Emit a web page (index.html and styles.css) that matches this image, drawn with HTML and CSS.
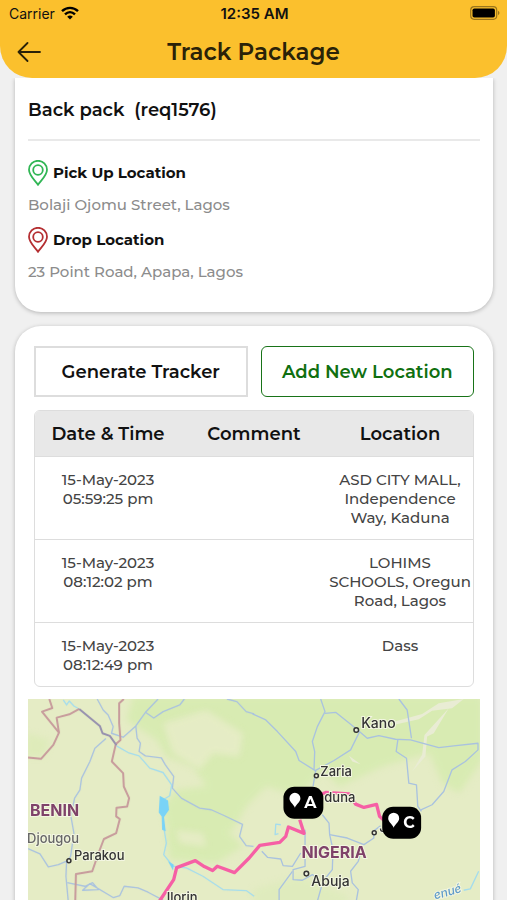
FILE: index.html
```
<!DOCTYPE html>
<html lang="en">
<head>
  <meta charset="UTF-8" />
  <meta name="viewport" content="width=device-width, initial-scale=1" />
  <title>Track Package</title>
  <link rel="stylesheet" href="styles.css">
</head>
<body>

<header>
  <div class="status-bar">
    <div class="carrier">
      <span>Carrier</span>
      <svg width="18" height="14" viewBox="0 0 18 14" fill="none" stroke="#000" stroke-width="2.4">
        <path d="M1 5.2C5.600 0.700 12.400 0.700 17 5.200"/>
        <path d="M4 8.400C7 5.500 11 5.500 14 8.400"/>
        <path d="M9 13.500L6.200 10.700Q9 8.500 11.800 10.700Z" fill="#000" stroke="none"/>
      </svg>
    </div>
    <div class="time">12:35 AM</div>
    <div class="battery">
      <svg width="30" height="14" viewBox="0 0 30 14">
        <rect x="0.700" y="0.700" width="26" height="12.600" rx="3.500" fill="none" stroke="#9a761c" stroke-width="1.200"/>
        <rect x="2.500" y="2.500" width="22.400" height="9" rx="1.800"/>
        <path d="M28 4.800Q31 7 28 9.200Z" fill="#9a761c"/>
      </svg>
    </div>
  </div>
  <div class="title-bar">
    <button class="back" aria-label="Back">
      <svg width="24" height="20" viewBox="0 0 24 20" fill="none" stroke="#2a2208" stroke-width="1.800" stroke-linecap="round" stroke-linejoin="round">
        <path d="M23 10H1.500M10.500 1L1.500 10L10.500 19"/>
      </svg>
    </button>
    <h1>Track Package</h1>
  </div>
</header>

<main>
  <section class="card package">
    <h2>Back pack&nbsp; (req1576)</h2>
    <h3 class="pickup">
      <svg class="pin" viewBox="0 0 20 26"><path d="M10 24.800C7 20.500 1 15.500 1 9.800A9 9 0 0 1 19 9.800C19 15.500 13 20.500 10 24.800Z"/><circle cx="10" cy="10" r="4.800"/></svg>
      Pick Up Location
    </h3>
    <p>Bolaji Ojomu Street, Lagos</p>
    <h3 class="drop">
      <svg class="pin" viewBox="0 0 20 26"><path d="M10 24.800C7 20.500 1 15.500 1 9.800A9 9 0 0 1 19 9.800C19 15.500 13 20.500 10 24.800Z"/><circle cx="10" cy="10" r="4.800"/></svg>
      Drop Location
    </h3>
    <p>23 Point Road, Apapa, Lagos</p>
  </section>

  <section class="card tracking">
    <div class="actions">
      <button class="generate">Generate Tracker</button>
      <button class="add">Add New Location</button>
    </div>

    <table>
      <thead>
        <tr><th>Date &amp; Time</th><th>Comment</th><th>Location</th></tr>
      </thead>
      <tbody>
        <tr><td>15-May-2023<br>05:59:25 pm</td><td></td><td>ASD CITY MALL,<br>Independence<br>Way, Kaduna</td></tr>
        <tr><td>15-May-2023<br>08:12:02 pm</td><td></td><td>LOHIMS<br>SCHOOLS, Oregun<br>Road, Lagos</td></tr>
        <tr><td>15-May-2023<br>08:12:49 pm</td><td></td><td>Dass</td></tr>
      </tbody>
    </table>

    <svg class="map" viewBox="0 0 453 300">
      <defs>
        <filter id="soft" x="-20%" y="-20%" width="140%" height="140%"><feGaussianBlur stdDeviation="9"/></filter>
      </defs>
      <rect width="453" height="300" fill="#e5ecc5"/>

      <!-- vegetation -->
      <g transform="translate(-28 -9) scale(.33333)" fill="#d8ebb2" filter="url(#soft)">
        <path d="M400 20H1450V210L1380 310L1330 280L1290 190L1150 230L1020 290L970 240L900 320L800 290L740 350L700 420L640 440L510 450L490 350L530 300L620 290L580 230L500 200L470 150L380 90Z"/>
        <path d="M500 430L650 390L730 470L650 520L510 510Z"/>
        <path d="M80 130L150 150L130 200L80 200Z" opacity=".6"/>
        <path d="M760 600L900 560L1050 620L1000 720H780Z" opacity=".4"/>
      </g>
      <g transform="translate(-28 -9) scale(.33333)" fill="#e5ecc5" filter="url(#soft)">
        <path d="M490 100L620 60L730 130L720 200L640 190L600 240L520 190Z"/>
        <path d="M530 420L610 430L620 470L540 460Z"/>
      </g>
      <g transform="translate(225 -9) scale(.33333)" fill="#e9ecd4">
        <path d="M420 97L510 72L560 40L635 27L600 55L540 62L500 88L430 104Z"/>
        <path d="M290 198L325 223L300 215Z"/>
        <path d="M590 55L545 130L525 140L520 200L480 245L510 195L517 135Z"/>
      </g>

      <!-- borders, rivers and lakes, west side -->
      <g transform="translate(-28 -9) scale(.33333)" fill="none" stroke-linejoin="round">
        <g stroke="#a9c2df" stroke-width="4">
          <path d="M292 27L310 60L325 75L340 110L335 130L370 142L408 108L437 67L475 27"/>
          <path d="M437 67L462 84L490 65L540 45L554 27"/>
          <path d="M408 108L412 145L422 160L418 185L437 198L485 204L497 225L522 260L518 295L545 325L600 355L635 360L675 378L729 404L720 440L740 468L762 470"/>
          <path d="M682 27L712 35L740 65L764 72"/>
          <path d="M318 146L285 175L270 215L245 265L240 300L224 325L213 380L222 430L212 500L200 515L198 560L205 635"/>
          <path d="M84 477L120 493L145 532L175 525L205 512"/>
          <path d="M202 579L255 590L278 579L296 600L248 602L270 582L340 624L360 618L373 590L415 595L445 608L490 632"/>
        </g>
        <g stroke="#a4dced" stroke-width="4">
          <path d="M190 30L200 45L208 33L222 48L238 57M350 168L385 188L418 198L450 235L490 248L516 285L510 318L490 330"/>
          <path d="M490 400L500 460L492 495L520 530L560 535L610 560L670 600L740 603L764 620"/>
        </g>
        <path d="M480 318L505 332L508 360L493 382L498 425L487 420L486 380L477 368Z" fill="#79d3f7"/>
        <path d="M505 515L522 525L520 543Z" fill="#79d3f7"/>
        <g stroke="#c79b9c" stroke-width="6">
          <path d="M148 27L157 54L126 65L177 128L160 165L123 207L84 203"/>
          <path d="M177 128L170 83L208 73L238 57"/>
          <path d="M372 27L358 40V100L362 150L348 162L336 215L370 250L372 290L388 325L382 350L350 354L349 380L360 388L349 430L312 448L296 490L277 545L228 553L226 635"/>
        </g>
        <path d="M238 57L300 108L308 130L330 138L350 166" stroke="#9690ae" stroke-width="6"/>
      </g>

      <!-- rivers, east side -->
      <g transform="translate(225 -9) scale(.33333)" fill="none" stroke="#a9c2df" stroke-width="4" stroke-linejoin="round">
        <path d="M0 72L40 90L75 125L130 185L140 212L190 243L182 290"/>
        <path d="M205 27L218 65L195 110L180 155L187 185L185 240"/>
        <path d="M218 70L250 67L310 115L345 145L380 137L430 148L475 150L560 173L605 168L678 160V180L640 215L600 240L575 305L540 345L503 362"/>
        <path d="M440 27L465 60L478 145M437 150L432 185L463 205L470 280L493 285L497 350L508 365"/>
        <path d="M322 125L295 180L245 212L187 243"/>
        <path d="M158 420V530L122 540V570L150 572L180 555L195 565M210 375L230 400L232 435L285 445L335 465L365 445L363 425L385 408"/>
        <path d="M28 485L45 503L85 508L92 528L120 530L145 490M120 545L80 600V635M232 435L242 480L240 540L212 575L195 635M325 490L318 515L295 545L300 580L318 600L312 635"/>
        <path d="M85 405L70 403L68 435L78 432M635 602L655 598L680 545" stroke="#a4dced"/>
      </g>

      <!-- route -->
      <g transform="translate(225 -9) scale(.33333)" fill="none" stroke="#f65fa5" stroke-width="10" stroke-linejoin="round">
        <path d="M-280 635L-237 570L-228 534L-172 513L-145 531L-120 543L-106 530L-54 549L-10 505L22 467L82 458L100 440L108 412L155 431L142 390"/>
        <path d="M190 320L220 308L290 312L310 343L335 353L373 344L382 380L395 392"/>
      </g>

      <g fill="#e9eedb" stroke="#333" stroke-width="1.500">
        <circle cx="41" cy="162" r="2"/>
        <circle cx="329" cy="31" r="2.300"/>
        <circle cx="289" cy="77" r="2"/>
        <circle cx="347" cy="134" r="2"/>
        <circle cx="279" cy="175" r="2.300"/>
      </g>

      <g class="labels">
        <text class="country" x="2" y="117">BENIN</text>
        <text class="country" x="274" y="159">NIGERIA</text>
        <text class="town minor" x="-1" y="144">Djougou</text>
        <text class="town" x="46" y="161">Parakou</text>
        <text class="town" x="139" y="203">Ilorin</text>
        <text class="city" x="334" y="29">Kano</text>
        <text class="town" x="293" y="77">Zaria</text>
        <text class="town" x="297" y="103">duna</text>
        <text class="town" x="352" y="133">J</text>
        <text class="city" x="284" y="187">Abuja</text>
        <text class="river" x="408" y="201" transform="rotate(-16 408 201)">enué</text>
      </g>

      <g class="marker">
        <rect x="256" y="88" width="40" height="32" rx="11"/>
        <path d="M267.500 109C266 105 262 103.500 262 99.500A5.500 5.500 0 0 1 273 99.500C273 103.500 269 105 267.500 109Z"/>
        <text x="283" y="109">A</text>
      </g>
      <g class="marker">
        <rect x="355" y="108" width="39" height="32" rx="11"/>
        <path d="M366.500 129C365 125 361 123.500 361 119.500A5.500 5.500 0 0 1 372 119.500C372 123.500 368 125 366.500 129Z"/>
        <text x="382" y="129">C</text>
      </g>
    </svg>
  </section>
</main>

</body>
</html>
```
FILE: styles.css
```
* {
  box-sizing: border-box;
}
body {
  font-family: Montserrat, Inter, sans-serif;
  margin: 0;
  height: 100vh;
  display: flex;
  flex-direction: column;
  overflow: hidden;
  background: #f0f0f0;
  color: #111;
}
h1, h2, h3, p {
  margin: 0;
}
button {
  font: inherit;
  cursor: pointer;
}
svg {
  display: block;
}

/* header */
header {
  flex: none;
  background: #fbc02d;
  border-radius: 0 0 32px 32px;
}
.status-bar {
  display: grid;
  grid-template-columns: 1fr auto 1fr;
  align-items: center;
  height: 26px;
  padding: 0 7px 0 9px;
  font-family: Inter, sans-serif;
  font-size: 14px;
}
.carrier {
  display: flex;
  align-items: center;
  gap: 6px;
}
.time {
  font-size: 15px;
  font-weight: 600;
}
.battery {
  justify-self: end;
}
.title-bar {
  display: grid;
  grid-template-columns: 44px 1fr 44px;
  align-items: center;
  height: 52px;
}
.back {
  border: 0;
  background: none;
  padding: 0 0 0 17px;
}
h1 {
  font-size: 23px;
  font-weight: 600;
  line-height: 32px;
  text-align: center;
  color: #2a2208;
}

/* cards */
main {
  flex: 1;
  overflow-y: auto;
  scrollbar-width: none;
  padding: 0 14px 14px 15px;
}
.card {
  background: #fff;
  border-radius: 26px;
  box-shadow: 0 1px 4px rgba(0, 0, 0, 0.25);
  padding: 0 13px;
}
.package {
  border-radius: 0 0 26px 26px;
  padding-bottom: 18px;
}
h2 {
  font-size: 18px;
  font-weight: 600;
  line-height: 24px;
  padding: 20px 0 17px;
  border-bottom: 2px solid #e9e9e9;
  margin-bottom: 19px;
}
h3 {
  display: flex;
  align-items: center;
  gap: 5px;
  font-size: 15px;
  font-weight: 700;
  line-height: 26px;
}
.pin {
  width: 20px;
  height: 26px;
  fill: none;
  stroke-width: 1.8;
}
.pickup .pin {
  stroke: #31b655;
}
.drop .pin {
  stroke: #b52f32;
}
.package p {
  font-size: 15px;
  font-weight: 500;
  line-height: 20px;
  padding: 9px 0 12px;
  color: #8c8c8c;
}

/* tracking */
.tracking {
  margin-top: 14px;
  padding: 20px 13px;
}
.actions {
  display: grid;
  grid-template-columns: 1fr 1fr;
  gap: 13px;
  margin: 0 6px 13px;
}
.actions button {
  height: 51px;
  padding: 0;
  background: #fff;
  font-size: 18px;
  font-weight: 600;
}
.actions .generate {
  border: 2px solid #ddd;
  color: #111;
}
.actions .add {
  border: 1px solid #187318;
  border-radius: 6px;
  color: #107010;
}
table {
  table-layout: fixed;
  width: calc(100% - 12px);
  margin: 0 6px 12px;
  border: 1px solid #ddd;
  border-radius: 6px;
  border-spacing: 0;
  overflow: hidden;
  text-align: center;
}
th {
  height: 45px;
  padding: 0;
  background: #e8e8e8;
  font-size: 18px;
  font-weight: 600;
}
td {
  padding: 13px 0 12px;
  border-top: 1px solid #ddd;
  font-size: 15px;
  font-weight: 500;
  line-height: 19px;
  vertical-align: top;
  color: #444;
}

/* map */
.map {
  width: 100%;
  height: auto;
}
.labels {
  font-family: Inter, sans-serif;
  font-size: 13px;
  font-weight: 500;
  fill: #333;
  stroke: #f3f6e2;
  stroke-width: 2px;
  paint-order: stroke;
}
.labels .city {
  font-size: 14px;
}
.labels .minor {
  fill: #666;
}
.labels .country {
  font-size: 16px;
  font-weight: 700;
  fill: #7f4269;
}
.labels .river {
  font-size: 12px;
  font-style: italic;
  fill: #5f9bc9;
}
.marker path, .marker text {
  fill: #fff;
}
.marker text {
  font-size: 16px;
  font-weight: 700;
  text-anchor: middle;
}
```
